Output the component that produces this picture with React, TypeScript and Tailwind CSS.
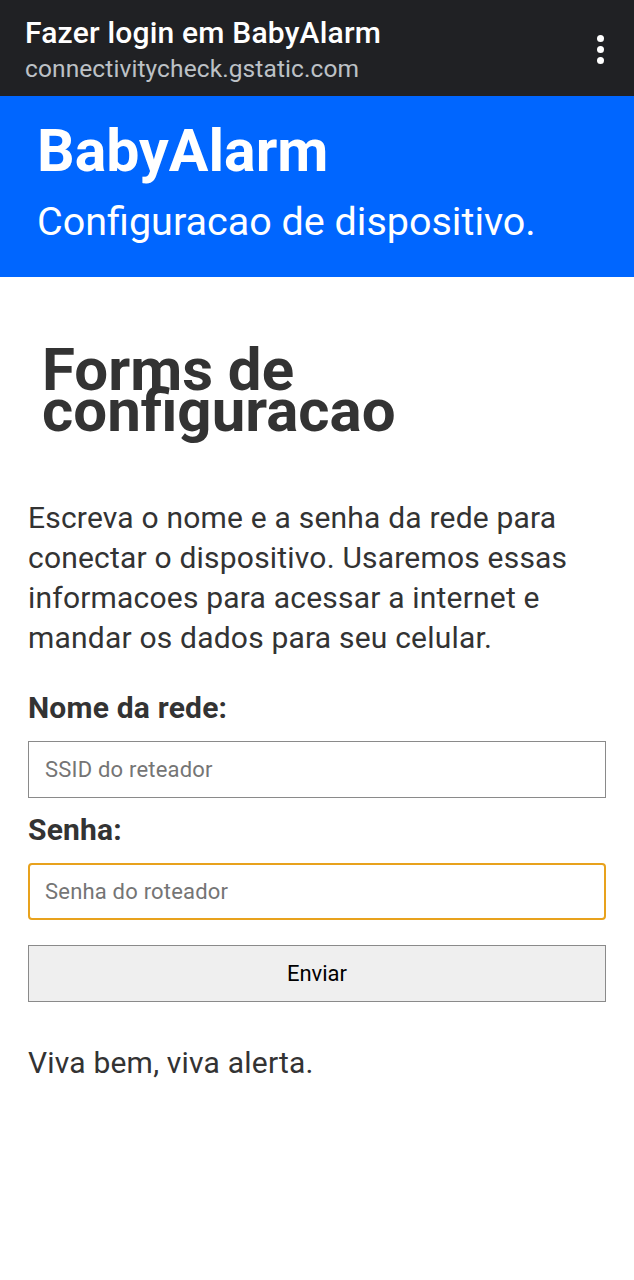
import React from "react";

export default function App() {
  return (
    <div className="w-[634px] min-h-[1280px] bg-white" style={{ fontFamily: "Roboto, 'Liberation Sans', sans-serif" }}>
      <div className="h-[96px] bg-[#202124] flex items-start justify-between pl-[25px] pr-[22px] pt-[13px]">
        <div className="flex flex-col">
          <div className="text-[30px] leading-[40px] text-white font-medium tracking-[0.2px]">Fazer login em BabyAlarm</div>
          <div className="text-[24.5px] leading-[32px] text-[#bdc1c6] tracking-[0.1px]">connectivitycheck.gstatic.com</div>
        </div>
        <div className="flex flex-col gap-[4px] pt-[22px] pr-[8px]">
          <span className="w-[7px] h-[7px] rounded-full bg-white" />
          <span className="w-[7px] h-[7px] rounded-full bg-white" />
          <span className="w-[7px] h-[7px] rounded-full bg-white" />
        </div>
      </div>
      <div className="h-[181px] bg-[#0066ff] pl-[37px] pt-[18px]">
        <div className="text-[59px] leading-[74px] font-bold text-white">BabyAlarm</div>
        <div className="text-[39.5px] leading-[52px] text-white mt-[8px]">Configuracao de dispositivo.</div>
      </div>
      <div className="px-[28px]">
        <h1 className="mt-[62px] ml-[14px] text-[60px] leading-[41px] font-bold text-[#333333] pt-[10px]">Forms de configuracao</h1>
        <p className="mt-[67px] text-[30px] leading-[40px] text-[#333333] tracking-[0.2px]">
          Escreva o nome e a senha da rede para conectar o dispositivo. Usaremos essas informacoes para acessar a internet e mandar os dados para seu celular.
        </p>
        <div className="mt-[30px] text-[30px] leading-[40px] font-bold text-[#333333] tracking-[0.2px]">Nome da rede:</div>
        <input
          className="mt-[13px] block w-full h-[57px] border border-[#8a8a8a] px-[16px] text-[22px] tracking-[0.2px] placeholder:text-[#757575] outline-none"
          placeholder="SSID do reteador"
        />
        <div className="mt-[12px] text-[30px] leading-[40px] font-bold text-[#333333] tracking-[0.2px]">Senha:</div>
        <input
          className="mt-[13px] block w-full h-[57px] border-2 border-[#e8a21d] rounded-[4px] px-[15px] text-[22px] tracking-[0.2px] placeholder:text-[#757575] outline-none"
          placeholder="Senha do roteador"
        />
        <button className="mt-[25px] block w-full h-[57px] bg-[#efefef] border border-[#8a8a8a] text-[22px] text-black">
          Enviar
        </button>
        <div className="mt-[41px] text-[30px] leading-[40px] text-[#333333] tracking-[0.2px]">Viva bem, viva alerta.</div>
      </div>
    </div>
  );
}
